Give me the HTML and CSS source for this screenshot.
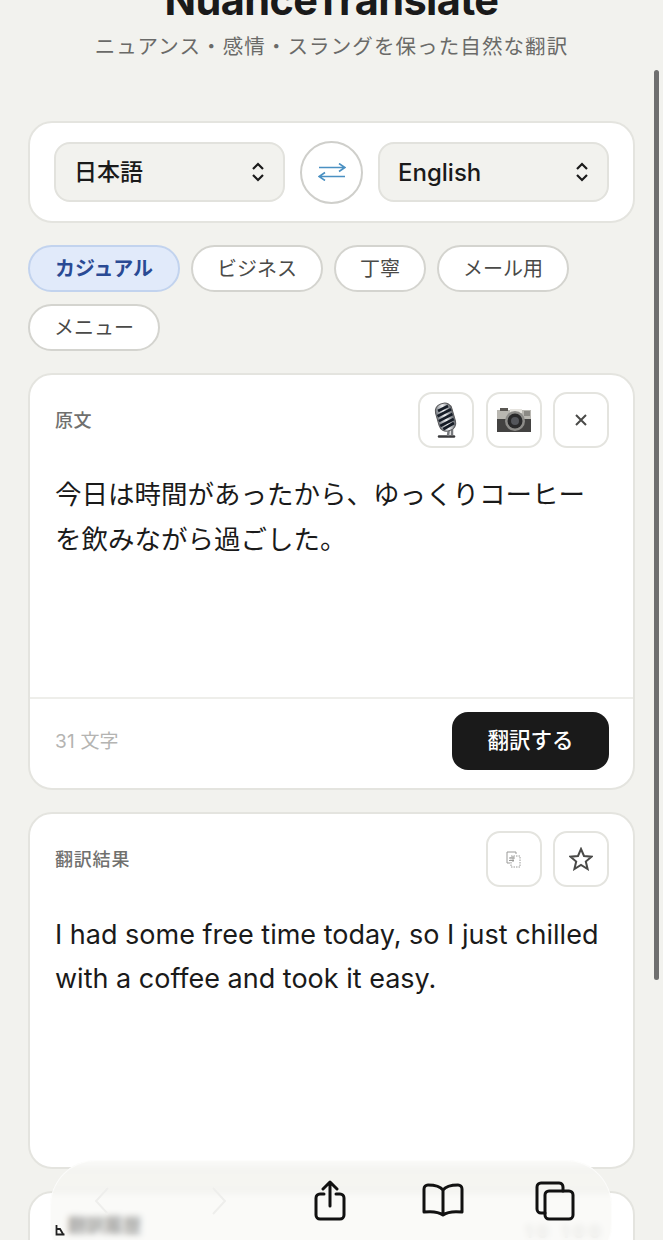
FILE: index.html
```html
<!DOCTYPE html>
<html lang="ja">
<head>
<meta charset="utf-8">
<title>NuanceTranslate</title>
<link rel="stylesheet" href="styles.css">
</head>
<body>
<div class="page">
  <header class="head">
    <h1 class="title">NuanceTranslate</h1>
    <p class="sub">ニュアンス・感情・スラングを保った自然な翻訳</p>
  </header>

  <section class="card langs">
    <div class="select"><span class="jp">日本語</span>
      <svg class="updown" viewBox="0 0 14 22"><path d="M2 8l5-5 5 5M2 14l5 5 5-5"/></svg>
    </div>
    <button class="swap" aria-label="swap">
      <svg viewBox="0 0 28 18"><path d="M1 4.500h26M21 .5l6 4-6 4M27 13.500H1M7 9.500l-6 4 6 4"/></svg>
    </button>
    <div class="select"><span>English</span>
      <svg class="updown" viewBox="0 0 14 22"><path d="M2 8l5-5 5 5M2 14l5 5 5-5"/></svg>
    </div>
  </section>

  <nav class="chips">
    <span class="chip on">カジュアル</span>
    <span class="chip">ビジネス</span>
    <span class="chip">丁寧</span>
    <span class="chip">メール用</span>
    <span class="chip">メニュー</span>
  </nav>

  <section class="card panel source">
    <div class="panel-head">
      <span class="label">原文</span>
      <div class="tools">
        <button class="tool" aria-label="mic">
          <svg width="30" height="36" viewBox="0 0 30 36">
            <defs><linearGradient id="chrome" x1="0" x2="1"><stop offset="0" stop-color="#70757c"/><stop offset=".5" stop-color="#f0f1f3"/><stop offset="1" stop-color="#5d6268"/></linearGradient></defs>
            <path d="M8 34.500h15" stroke="#3a3a3c" stroke-width="2.500" stroke-linecap="round"/>
            <path d="M18 26l-1 8M21 25l0 8" stroke="#77797d" stroke-width="2.500"/>
            <g transform="rotate(-16 15 15)">
              <rect x="6" y="1" width="17" height="28" rx="7.500" fill="url(#chrome)" stroke="#5a5a5c" stroke-width="1"/>
              <path d="M9 7l11-2M7 12l15-3M7 17l15-3M7 22l15-3M9 26l12-3" stroke="#161c26" stroke-width="2.800"/>
            </g>
          </svg>
        </button>
        <button class="tool" aria-label="camera">
          <svg width="34" height="24" viewBox="0 0 34 24">
            <rect x="0" y="2" width="34" height="10" fill="#b9b7b1"/>
            <rect x="3" y="0" width="8" height="3" fill="#5a5753"/>
            <rect x="13" y="1" width="12" height="4" fill="#e6e4df"/>
            <rect x="27" y="3" width="6" height="5" fill="#8c8a85"/>
            <rect x="0" y="11" width="34" height="13" fill="#434241"/>
            <circle cx="18" cy="13" r="10" fill="#8d8c89"/>
            <circle cx="18" cy="13" r="7.500" fill="#2a2a2b"/>
            <circle cx="18" cy="13" r="4" fill="#54565b"/>
          </svg>
        </button>
        <button class="tool" aria-label="clear">
          <svg class="line" width="14" height="14" viewBox="0 0 14 14"><path d="M2 2l10 10M12 2L2 12"/></svg>
        </button>
      </div>
    </div>
    <p class="body-text">今日は時間があったから、ゆっくりコーヒーを飲みながら過ごした。</p>
    <div class="panel-foot">
      <span class="count">31 文字</span>
      <button class="go"><span class="go-text">翻訳する</span></button>
    </div>
  </section>

  <section class="card panel result">
    <div class="panel-head">
      <span class="label wide">翻訳結果</span>
      <div class="tools">
        <button class="tool" aria-label="copy">
          <svg class="copy" width="16" height="17" viewBox="0 0 16 17">
            <path d="M10 3V1H1v11h3"/>
            <path d="M5 5h9v11H5z" stroke-dasharray="1.500 1"/>
            <path d="M3 7h6M3 9.500h5M7 5v6"/>
          </svg>
        </button>
        <button class="tool" aria-label="star">
          <svg class="line" width="24" height="24" viewBox="0 0 24 24"><path d="M12 2l3 7 7.500.7-5.700 4.900 1.800 7.400L12 18l-6.600 4 1.800-7.400L1.500 9.700 9 9z"/></svg>
        </button>
      </div>
    </div>
    <p class="body-text en">I had some free time today, so I just chilled with a coffee and took it easy.</p>
  </section>

  <section class="card panel peek">
    <div class="panel-head">
      <span class="label">翻訳履歴</span>
      <span class="peek-right">10 100</span>
    </div>
  </section>
</div>

<div class="scrollbar"></div>

<div class="toolbar">
  <svg class="chev c1" width="16" height="30" viewBox="0 0 16 30"><path d="M14 2L2 15l12 13"/></svg>
  <svg class="chev c2" width="16" height="30" viewBox="0 0 16 30"><path d="M2 2l12 13L2 28"/></svg>
  <svg class="bar-icon i1" width="32" height="41" viewBox="0 0 32 41"><path d="M10 14H6a4 4 0 0 0-4 4v17a4 4 0 0 0 4 4h20a4 4 0 0 0 4-4V18a4 4 0 0 0-4-4h-4M16 26V2M9 9l7-7 7 7"/></svg>
  <svg class="bar-icon i2" width="42" height="34" viewBox="0 0 42 34"><path d="M21 7C18 3 13 2 6 2a4 4 0 0 0-4 4v23c9-1 15 0 19 3 4-3 10-4 19-3V6a4 4 0 0 0-4-4c-7 0-12 1-15 5zM21 7v25"/></svg>
  <svg class="bar-icon i3" width="40" height="40" viewBox="0 0 40 40"><rect x="10" y="10" width="28" height="28" rx="4"/><path d="M10 32H6a4 4 0 0 1-4-4V6a4 4 0 0 1 4-4h18a4 4 0 0 1 4 4v4"/></svg>
</div>
<svg class="mark" width="11" height="11" viewBox="0 0 11 11"><path d="M1.500 0v9.500h8M1.500 4h3.500l3 5"/></svg>
</body>
</html>
```

FILE: styles.css
```css
* { box-sizing: border-box; }
html, body { margin: 0; height: 1240px; overflow: hidden; }
body {
  background: #f2f2ee;
  color: #1a1a1a;
  font-family: Inter, "Noto Sans CJK JP", sans-serif;
  position: relative;
}
button { font: inherit; padding: 0; cursor: pointer; }
.page {
  padding: 0 28px;
  display: flex;
  flex-direction: column;
}
.head { text-align: center; margin-top: -23px; height: 144px; }
.title {
  margin: 0;
  font-size: 41.500px;
  line-height: 46px;
  font-weight: 700;
  letter-spacing: -.6px;
  color: #1a1a1a;
}
.sub {
  margin: 9px 0 0;
  font-size: 20.500px;
  line-height: 30px;
  letter-spacing: 1.100px;
  color: #6a6a68;
}
.card {
  background: #fff;
  border: 2px solid #e4e4df;
  border-radius: 24px;
}
.langs {
  height: 102px;
  padding: 0 24px;
  display: flex;
  align-items: center;
  gap: 15px;
}
.select {
  flex: 1;
  height: 60px;
  background: #f2f2ee;
  border: 2px solid #e2e2dd;
  border-radius: 16px;
  padding: 0 18px 0 18px;
  display: flex;
  align-items: center;
  justify-content: space-between;
  font-size: 24px;
  font-weight: 500;
}
.jp { font-size: 23px; margin: -5px 0 0 0; }
.updown { width: 14px; height: 22px; fill: none; stroke: #1a1a1a; stroke-width: 2.200; }
.swap {
  flex: none;
  width: 63px;
  height: 63px;
  border-radius: 50%;
  background: #fff;
  border: 2px solid #cfcfcb;
  display: flex;
  align-items: center;
  justify-content: center;
}
.swap svg { width: 28px; height: 18px; fill: none; stroke: #4a90c2; stroke-width: 1.600; }
.chips {
  display: flex;
  flex-wrap: wrap;
  gap: 11px;
  margin-top: 22px;
  row-gap: 11.500px;
}
.chip {
  height: 47px;
  padding: 0 24px 2px;
  border-radius: 24px;
  background: #fff;
  border: 2px solid #d4d4cf;
  display: flex;
  align-items: center;
  font-size: 20px;
  color: #4a4a48;
}
.chip.on {
  padding: 0 25px 2px;
  background: #e1eafa;
  border-color: #c2d3ee;
  color: #2a4a94;
  font-weight: 700;
}
.panel { display: flex; flex-direction: column; }
.source { height: 417px; margin-top: 22.500px; }
.result { height: 357px; margin-top: 22px; }
.peek { height: 200px; margin-top: 22px; }
.panel-head {
  display: flex;
  justify-content: space-between;
  align-items: center;
  padding: 17px 24px 0 25px;
}
.label { font-size: 18px; font-weight: 500; color: #70706e; letter-spacing: .4px; margin-top: -2px; }
.label.wide { letter-spacing: .8px; }
.tools { display: flex; gap: 11.500px; }
.tool {
  width: 56px;
  height: 56px;
  background: #fff;
  border: 2px solid #e4e4df;
  border-radius: 14px;
  display: flex;
  align-items: center;
  justify-content: center;
}
.line { fill: none; stroke: #4a4a48; stroke-width: 2; }
.copy { fill: none; stroke: #9a9a98; stroke-width: 1; }
.body-text {
  margin: 24px 0 0;
  padding: 0 24px 0 25px;
  font-size: 26.500px;
  line-height: 45px;
  color: #1a1a1a;
  flex: 1;
}
.body-text.en { font-size: 27px; line-height: 44.500px; margin-top: 25.500px; }
.panel-foot {
  border-top: 2px solid #eeeeea;
  height: 91px;
  padding: 13px 24px 18px 25px;
  display: flex;
  align-items: center;
  justify-content: space-between;
}
.count { font-size: 19px; color: #b4b4b2; letter-spacing: .2px; margin-top: -3px; }
.go {
  width: 157px;
  height: 58px;
  background: #1a1a1a;
  color: #fff;
  border: 0;
  border-radius: 16px;
  font-size: 21.500px;
  font-weight: 500;
}
.go-text { display: block; margin-top: -5px; }
.peek .panel-head { padding: 22px 28px 0 38px; align-items: flex-start; }
.peek .label { color: #2a2a2a; font-size: 18px; line-height: 22px; margin: 0; font-weight: 900; }
.peek-right { font-size: 18px; line-height: 22px; color: #d4d4d2; font-weight: 700; letter-spacing: 4px; margin-top: 6px; }
.scrollbar {
  position: absolute;
  left: 654px;
  top: 70px;
  width: 5px;
  height: 910px;
  border-radius: 3px;
  background: #6f6f6f;
}
.toolbar {
  position: absolute;
  left: 50px;
  top: 1160px;
  width: 562px;
  height: 110px;
  border-radius: 46px;
  background: rgba(246, 246, 243, .6);
  box-shadow: inset 0 0 0 1px rgba(255, 255, 255, .6);
  -webkit-backdrop-filter: blur(3px);
  backdrop-filter: blur(3px);
}
.chev { position: absolute; top: 26px; fill: none; stroke: #eeeeec; stroke-width: 2; }
.c1 { left: 44px; }
.c2 { left: 161px; }
.bar-icon { position: absolute; fill: none; stroke: #111; stroke-width: 3; stroke-linecap: round; stroke-linejoin: round; }
.i1 { left: 264px; top: 20px; }
.i2 { left: 372px; top: 23px; }
.i3 { left: 485px; top: 21px; }
.mark { position: absolute; left: 55px; top: 1225px; fill: none; stroke: #222; stroke-width: 1.800; }
```
